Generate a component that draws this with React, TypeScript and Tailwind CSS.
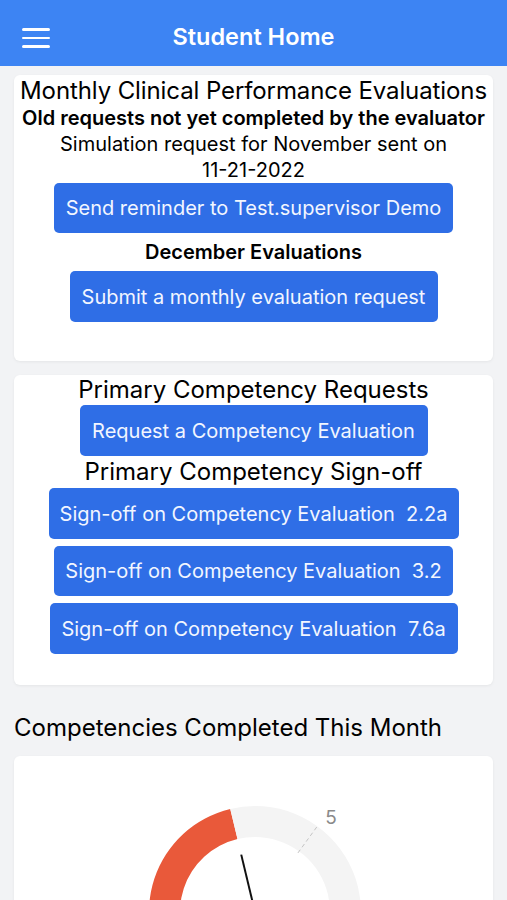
import React from "react";

const font = { fontFamily: "Inter, 'Noto Sans', sans-serif" };

function polar(cx: number, cy: number, r: number, deg: number) {
  const a = (deg * Math.PI) / 180;
  return [cx + r * Math.sin(a), cy - r * Math.cos(a)];
}

function sector(cx: number, cy: number, r0: number, r1: number, a0: number, a1: number) {
  const [x0, y0] = polar(cx, cy, r1, a0);
  const [x1, y1] = polar(cx, cy, r1, a1);
  const [x2, y2] = polar(cx, cy, r0, a1);
  const [x3, y3] = polar(cx, cy, r0, a0);
  const large = a1 - a0 > 180 ? 1 : 0;
  return `M${x0} ${y0} A${r1} ${r1} 0 ${large} 1 ${x1} ${y1} L${x2} ${y2} A${r0} ${r0} 0 ${large} 0 ${x3} ${y3} Z`;
}

function BlueButton({ children, className = "" }: { children: React.ReactNode; className?: string }) {
  return (
    <button
      type="button"
      className={`flex items-center justify-center rounded-[5px] bg-[#2f6ee6] px-[12px] text-[20px] text-[#f2f6ff] whitespace-pre ${className}`}
    >
      {children}
    </button>
  );
}

function Gauge() {
  const cx = 241;
  const cy = 156;
  const needle = -13.5;
  const [tx0, ty0] = polar(cx, cy, 73, 36);
  const [tx1, ty1] = polar(cx, cy, 106, 36);
  const [lx, ly] = polar(cx, cy, 122, 38.5);
  const [nx0, ny0] = polar(cx, cy, 59, needle);
  return (
    <svg width="479" height="200" viewBox="0 0 479 200" className="block">
      <path d={sector(cx, cy, 75, 106, -130, needle)} fill="#e9593a" />
      <path d={sector(cx, cy, 75, 106, needle, 130)} fill="#f4f4f4" />
      <line x1={tx0} y1={ty0} x2={tx1} y2={ty1} stroke="#c4c4c4" strokeWidth="1" strokeDasharray="4 3" />
      <text x={lx} y={ly + 7} textAnchor="middle" fontSize="19" fill="#8a8a8a" style={font}>
        5
      </text>
      <line x1={nx0} y1={ny0} x2={cx} y2={cy} stroke="#111" strokeWidth="2" />
    </svg>
  );
}

export default function App() {
  return (
    <div className="min-h-[900px] bg-[#f2f3f5] text-black" style={font}>
      <header className="relative flex h-[66px] items-center justify-center bg-[#3d84f3]">
        <button type="button" aria-label="Menu" className="absolute left-[22px] top-[28px] flex w-[28px] flex-col gap-[6px]">
          <span className="h-[2.5px] w-full rounded bg-white" />
          <span className="h-[2.5px] w-full rounded bg-white" />
          <span className="h-[2.5px] w-full rounded bg-white" />
        </button>
        <h1 className="pt-[8px] text-[23.5px] font-semibold text-white">Student Home</h1>
      </header>

      <main className="px-[14px]">
        <section className="mt-[9px] flex flex-col items-center rounded-[6px] bg-white pb-[39px] text-center shadow-[0_1px_3px_rgba(0,0,0,0.06)]">
          <h2 className="pt-[1px] text-[24px] leading-[30px] tracking-[-0.1px]">Monthly Clinical Performance Evaluations</h2>
          <p className="text-[20px] font-semibold leading-[25px]">Old requests not yet completed by the evaluator</p>
          <p className="text-[20px] leading-[26px]">
            Simulation request for November sent on
            <br />
            11-21-2022
          </p>
          <BlueButton className="h-[50px] w-[399px]">Send reminder to Test.supervisor Demo</BlueButton>
          <p className="text-[20px] font-semibold leading-[38px]">December Evaluations</p>
          <BlueButton className="h-[51px] w-[368px]">Submit a monthly evaluation request</BlueButton>
        </section>

        <section className="mt-[14px] flex flex-col items-center rounded-[6px] bg-white pb-[31px] text-center shadow-[0_1px_3px_rgba(0,0,0,0.06)]">
          <h2 className="text-[24px] leading-[30px]">Primary Competency Requests</h2>
          <BlueButton className="h-[51px] w-[348px]">Request a Competency Evaluation</BlueButton>
          <h2 className="text-[24px] leading-[32px]">Primary Competency Sign-off</h2>
          <div className="flex flex-col items-center gap-[7px]">
            <BlueButton className="h-[51px] w-[410px]">{"Sign-off on Competency Evaluation  2.2a"}</BlueButton>
            <BlueButton className="h-[50px] w-[399px]">{"Sign-off on Competency Evaluation  3.2"}</BlueButton>
            <BlueButton className="h-[51px] w-[408px]">{"Sign-off on Competency Evaluation  7.6a"}</BlueButton>
          </div>
        </section>

        <h2 className="mt-[28px] text-[24px] leading-[30px]">Competencies Completed This Month</h2>

        <section className="mt-[13px] overflow-hidden rounded-[6px] bg-white shadow-[0_1px_3px_rgba(0,0,0,0.06)]">
          <Gauge />
        </section>
      </main>
    </div>
  );
}
